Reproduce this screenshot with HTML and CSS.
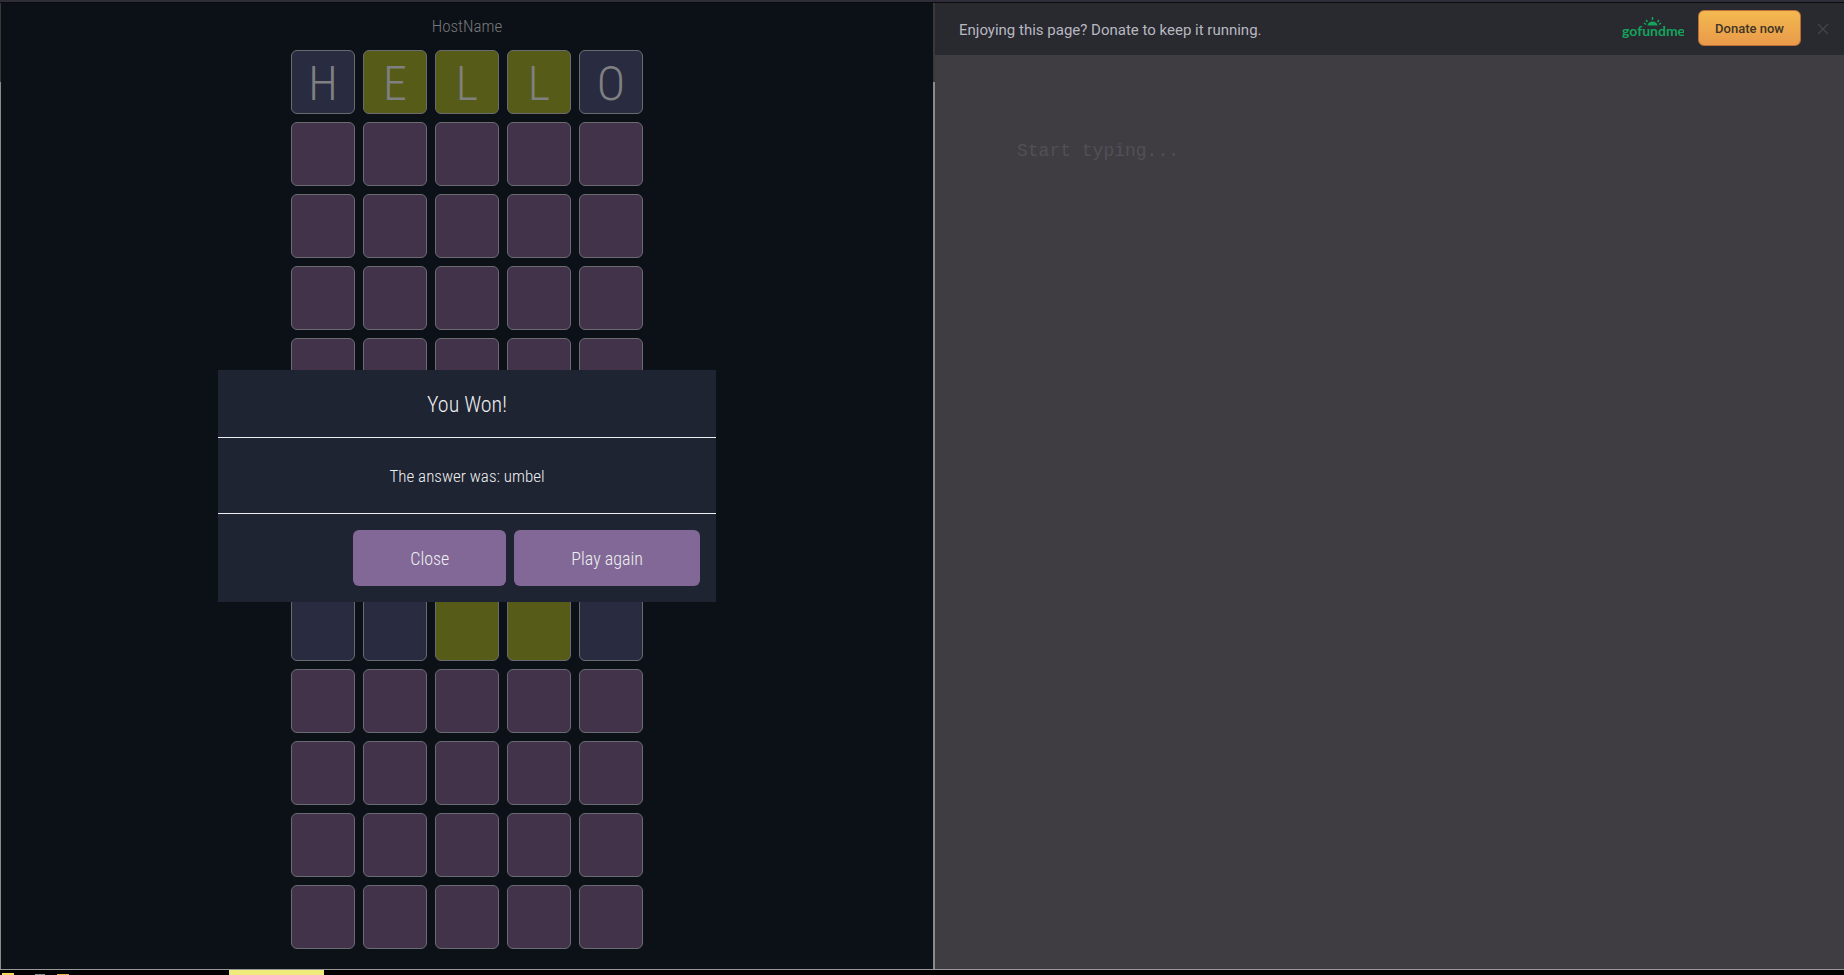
FILE: index.html
```html
<!DOCTYPE html>
<html lang="en">
<head>
<meta charset="utf-8">
<title>Word Game</title>
<link rel="stylesheet" href="styles.css">
</head>
<body>
<div class="topline"></div>
<main class="workspace">
  <section class="game">
    <h1 class="player">HostName</h1>
    <div class="board">
      <span class="tile miss">H</span><span class="tile near">E</span><span class="tile near">L</span><span class="tile near">L</span><span class="tile miss">O</span>
      <span class="tile"></span><span class="tile"></span><span class="tile"></span><span class="tile"></span><span class="tile"></span>
      <span class="tile"></span><span class="tile"></span><span class="tile"></span><span class="tile"></span><span class="tile"></span>
      <span class="tile"></span><span class="tile"></span><span class="tile"></span><span class="tile"></span><span class="tile"></span>
      <span class="tile"></span><span class="tile"></span><span class="tile"></span><span class="tile"></span><span class="tile"></span>
    </div>
    <div class="board">
      <span class="tile miss"></span><span class="tile miss"></span><span class="tile near"></span><span class="tile near"></span><span class="tile miss"></span>
      <span class="tile"></span><span class="tile"></span><span class="tile"></span><span class="tile"></span><span class="tile"></span>
      <span class="tile"></span><span class="tile"></span><span class="tile"></span><span class="tile"></span><span class="tile"></span>
      <span class="tile"></span><span class="tile"></span><span class="tile"></span><span class="tile"></span><span class="tile"></span>
      <span class="tile"></span><span class="tile"></span><span class="tile"></span><span class="tile"></span><span class="tile"></span>
    </div>
    <div class="modal" role="dialog" aria-labelledby="modal-title">
      <h2 class="modal-title" id="modal-title">You Won!</h2>
      <p class="modal-body">The answer was: umbel</p>
      <div class="modal-actions">
        <button class="action" type="button">Close</button>
        <button class="action" type="button">Play again</button>
      </div>
    </div>
  </section>
  <section class="notes">
    <div class="banner">
      <p class="banner-text">Enjoying this page? Donate to keep it running.</p>
      <svg class="logo" width="62" height="24" viewBox="0 0 62 24" role="img" aria-label="gofundme">
        <text class="logo-text" x="0" y="19">gofundme</text>
        <path d="M25.500 8.500a5 4 0 0 1 10 0z" fill="#15a35c"/>
        <path d="M30.500 3V0M25.500 5l-1.500-2M35.500 5L37 3M24 7.500l-2-1.500M37 7.500l2-1.500" stroke="#15a35c" stroke-width="1.500" fill="none"/>
      </svg>
      <button class="donate" type="button">Donate now</button>
      <button class="dismiss" type="button" aria-label="Close banner">
        <svg width="12" height="12" viewBox="0 0 12 12"><path d="M1 1l10 10M11 1L1 11" stroke="#45444b" stroke-width="1.200"/></svg>
      </button>
    </div>
    <textarea class="editor" aria-label="Notes" placeholder="Start typing..."></textarea>
  </section>
</main>
<footer class="taskbar"><i class="chip pale"></i><i class="chip gray"></i><i class="chip gold"></i><i class="tab"></i></footer>
</body>
</html>
```
FILE: styles.css
```css
* { box-sizing: border-box; }
body {
  margin: 0;
  height: 100vh;
  display: flex;
  flex-direction: column;
  overflow: hidden;
  background: #000;
  font-family: "Roboto Condensed", "Open Sans Condensed", "Roboto", sans-serif;
  font-weight: 300;
}
h1, h2, p { margin: 0; font-weight: 300; }
button { border: 0; padding: 0; font: inherit; }
.topline { height: 3px; background: #2f2d37; border-bottom: 1px solid #0b0b0d; }
.workspace {
  flex: 1;
  min-height: 0;
  display: grid;
  grid-template-columns: 935fr 909fr;
  border-bottom: 1px solid #98989b;
}
.game {
  position: relative;
  display: flex;
  flex-direction: column;
  align-items: center;
  overflow: hidden;
  border: solid;
  border-width: 0 2px 0 1px;
  border-image: linear-gradient(#393938 80px, #8b8c89 80px) 1;
  background: #0c1117;
}
.player { padding-top: 11px; height: 47px; line-height: 24px; font-size: 17px; color: #77787a; }
.board { display: grid; grid-template-columns: repeat(5, 64px); gap: 8px; }
.board + .board { margin-top: 195px; }
.tile {
  height: 64px;
  border: 1px solid #696b70;
  border-radius: 6px;
  background: #42334b;
  color: #7f8081;
  font-size: 48px;
  line-height: 66px;
  text-align: center;
}
.miss { background: #292b40; }
.near { background: #575b18; }
.modal {
  position: absolute;
  top: 367px;
  left: 50%;
  width: 498px;
  transform: translateX(-50%);
  background: #1e2431;
  color: #eeeff1;
  text-align: center;
}
.modal-title { height: 68px; line-height: 70px; font-size: 22px; border-bottom: 1px solid #eeeff1; }
.modal-body { height: 76px; line-height: 76px; font-size: 17px; border-bottom: 1px solid #eeeff1; }
.modal-actions { display: flex; justify-content: flex-end; gap: 8px; padding: 16px; }
.action {
  height: 56px;
  padding: 0 57px;
  border-radius: 6px;
  background: #826896;
  color: #eeeff1;
  font-size: 18px;
}
.notes { display: flex; flex-direction: column; background: #3f3d42; }
.banner {
  display: flex;
  align-items: center;
  height: 52px;
  padding: 0 13px 0 24px;
  background: #292930;
}
.banner-text { margin-right: auto; padding-top: 2px; font: 400 15px/20px "Roboto", sans-serif; color: #b8b8c0; }
.logo { margin-right: 14px; }
.logo-text { font: 700 14px "Lato", sans-serif; fill: #15a35c; }
.donate {
  width: 103px;
  height: 36px;
  margin: 0 14px 2px 0;
  border: 1px solid #b76d35;
  border-radius: 6px;
  background: linear-gradient(#f3b950, #e99a4a);
  color: #403526;
  font: 500 13px "Roboto", sans-serif;
}
.dismiss { display: flex; padding: 2px; background: none; }
.editor {
  flex: 1;
  padding: 84px 82px;
  border: 0;
  resize: none;
  background: none;
  font: 18px/24px "Liberation Mono", monospace;
  color: #b8b8c0;
}
.editor::placeholder { color: #515057; opacity: 1; }
.taskbar { display: flex; align-items: flex-end; height: 5px; padding-left: 2px; }
.chip { width: 12px; height: 2px; }
.pale { background: #f9d65a; margin-right: 21px; }
.gray { width: 10px; height: 1px; margin-right: 12px; background: #8d8d8d; }
.gold { height: 1px; margin-right: 160px; background: #e3b04a; }
.tab { width: 95px; height: 5px; background: #efea7c; }
```
